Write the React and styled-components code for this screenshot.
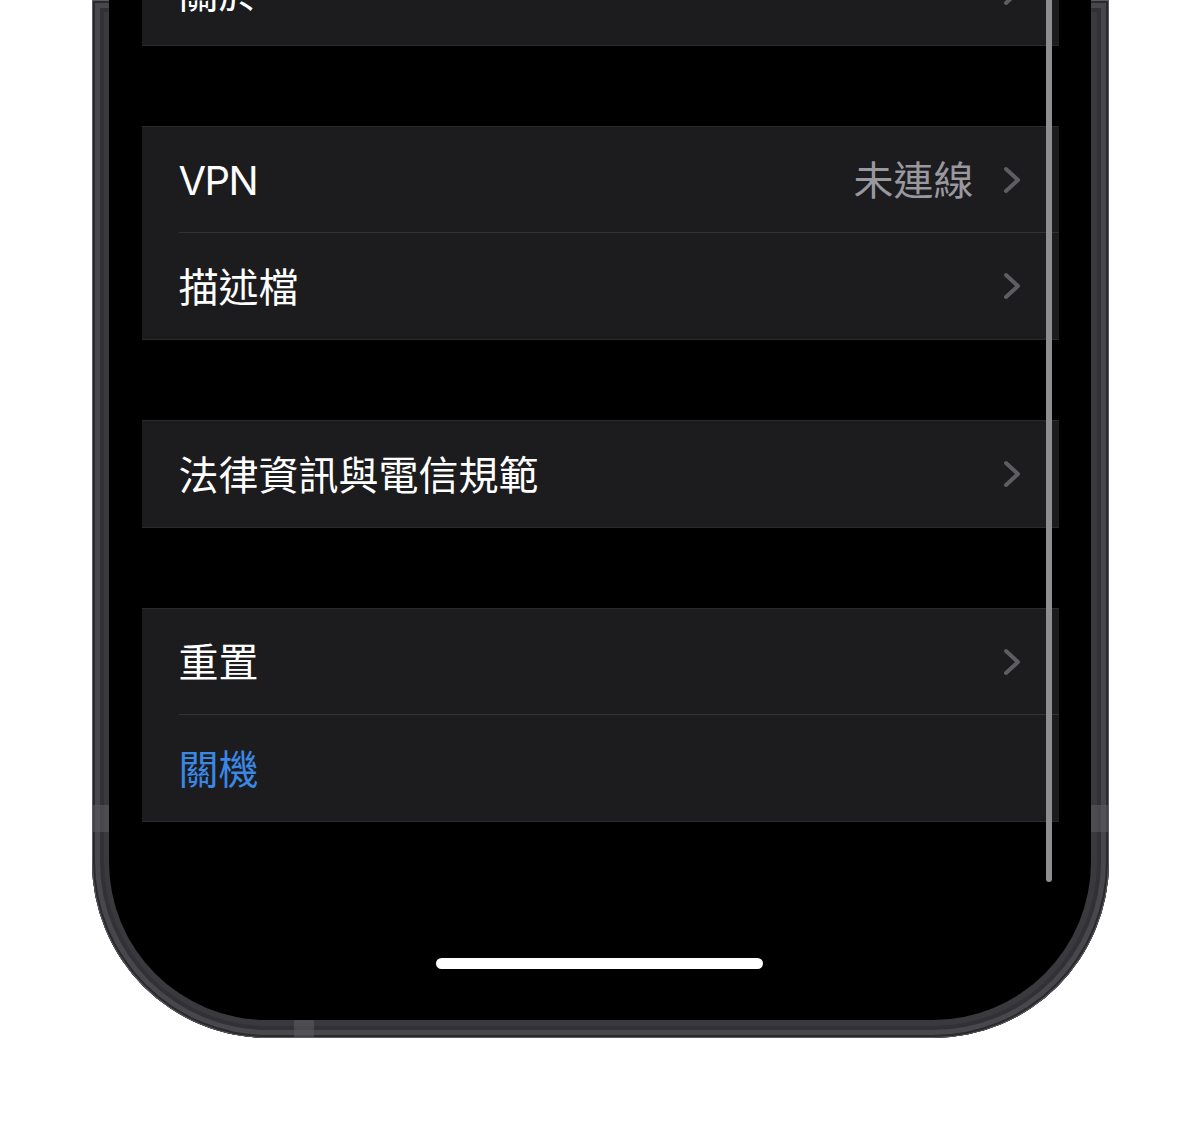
import React from 'react'
import styled, { createGlobalStyle } from 'styled-components'

const GlobalStyle = createGlobalStyle`
    html, body {
        margin: 0;
        padding: 0;
        background: #ffffff;
    }
    body {
        font-family: Inter, "Noto Sans CJK TC", sans-serif;
    }
`

const Page = styled.div`
    width: 1200px;
    height: 1130px;
    overflow: hidden;
    background: #ffffff;
`

const Phone = styled.div`
    position: relative;
    width: 1017px;
    margin: 0 auto;
    padding: 0 18px 18px 17px;
    box-sizing: border-box;
    background: #3a3a3e;
    border-radius: 0 0 176px 176px;
    box-shadow:
        inset 0 0 0 1px #5a5a5f,
        inset 0 0 0 3px #2a2a2d,
        inset 0 0 0 8px #47474c,
        inset 0 0 0 12px #323236;
`

const Band = styled.span`
    position: absolute;
    background: #5b5b61;
    opacity: 0.55;
    ${props => props.side === 'left' && 'left: 0; top: 805px; width: 17px; height: 27px;'}
    ${props => props.side === 'right' && 'right: 0; top: 805px; width: 18px; height: 27px;'}
    ${props => props.side === 'bottom' && 'left: 202px; bottom: 0; width: 20px; height: 18px;'}
`

const Screen = styled.div`
    position: relative;
    height: 1020px;
    background: #000000;
    border-radius: 0 0 158px 158px;
    overflow: hidden;
    display: flex;
    flex-direction: column;
`

const List = styled.div`
    margin-top: -61px;
    padding: 0 32px 0 33px;
    display: flex;
    flex-direction: column;
    gap: 82px;
`

const Group = styled.div`
    background: #1c1c1e;
    box-shadow: 0 1px 0 #2a2a2c, 0 -1px 0 #2a2a2c;
`

const Row = styled.div`
    height: 106px;
    padding-left: 37px;
    display: flex;
`

const RowBody = styled.div`
    flex: 1;
    display: flex;
    align-items: center;
    padding-right: 38px;
    border-bottom: ${props => props.last ? 'none' : '1px solid #333336'};
`

const Label = styled.span`
    flex: 1;
    font-size: 40px;
    line-height: 1;
    letter-spacing: ${props => props.latin ? '-0.04em' : '0'};
    color: ${props => props.blue ? '#3b87e4' : '#ffffff'};
    padding-top: 3px;
`

const Value = styled.span`
    font-size: 40px;
    line-height: 1;
    color: #98989e;
    margin-right: 29px;
    padding-top: 3px;
`

const ChevronIcon = styled.svg`
    width: 18px;
    height: 28px;
    flex-shrink: 0;
`

const Chevron = () => (
    <ChevronIcon viewBox="0 0 18 28">
        <polyline
            points="3,3 15,14 3,25"
            fill="none"
            stroke="#5d5d62"
            strokeWidth="4"
            strokeLinecap="round"
            strokeLinejoin="round"
        />
    </ChevronIcon>
)

const Spacer = styled.div`
    flex: 1;
`

const HomeBar = styled.div`
    width: 327px;
    height: 11px;
    margin: 0 auto 51px;
    border-radius: 6px;
    background: #ffffff;
`

const ScrollBar = styled.div`
    position: absolute;
    top: 0;
    right: 39px;
    width: 6px;
    height: 882px;
    border-radius: 0 0 3px 3px;
    background: #8e8e90;
`

const groups = [
    [{ label: '關於', chevron: true }],
    [
        { label: 'VPN', value: '未連線', chevron: true, latin: true },
        { label: '描述檔', chevron: true },
    ],
    [{ label: '法律資訊與電信規範', chevron: true }],
    [
        { label: '重置', chevron: true },
        { label: '關機', blue: true },
    ],
]

const App = () => {
    return (
        <Page>
            <GlobalStyle />
            <Phone>
                <Screen>
                    <List>
                        { groups.map((rows, g) => (
                            <Group key={g}>
                                { rows.map((row, i) => (
                                    <Row key={row.label}>
                                        <RowBody last={i === rows.length - 1}>
                                            <Label blue={row.blue} latin={row.latin}>{ row.label }</Label>
                                            { row.value && <Value>{ row.value }</Value> }
                                            { row.chevron && <Chevron /> }
                                        </RowBody>
                                    </Row>
                                ))}
                            </Group>
                        ))}
                    </List>
                    <Spacer />
                    <HomeBar />
                    <ScrollBar />
                </Screen>
                <Band side="left" />
                <Band side="right" />
                <Band side="bottom" />
            </Phone>
        </Page>
    )
}

export default App
